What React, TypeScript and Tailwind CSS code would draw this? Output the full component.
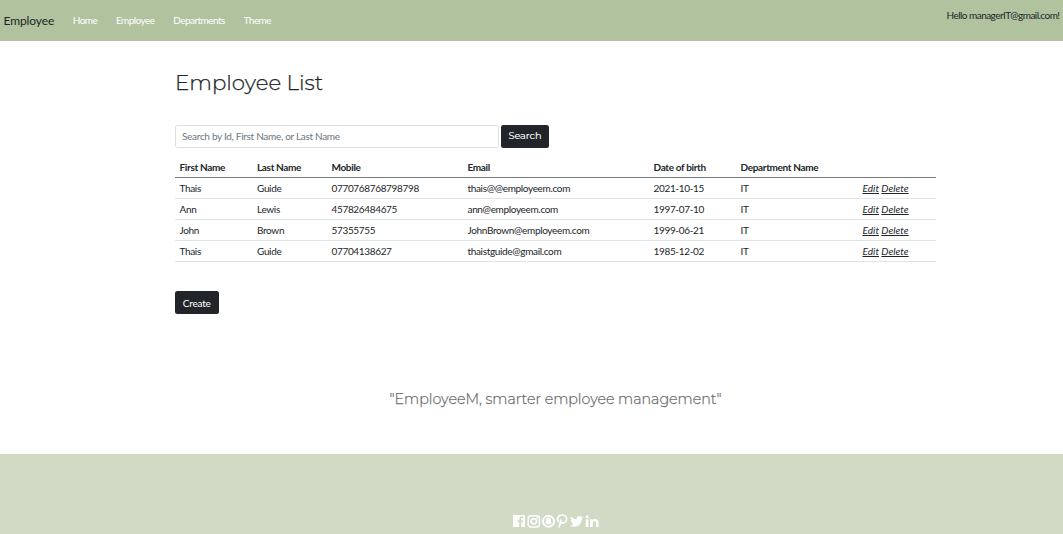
const employees = [
  ["Thais", "Guide", "0770768768798798", "thais@@employeem.com", "2021-10-15", "IT"],
  ["Ann", "Lewis", "457826484675", "ann@employeem.com", "1997-07-10", "IT"],
  ["John", "Brown", "57355755", "JohnBrown@employeem.com", "1999-06-21", "IT"],
  ["Thais", "Guide", "07704138627", "thaistguide@gmail.com", "1985-12-02", "IT"],
];

const headings = ["First Name", "Last Name", "Mobile", "Email", "Date of birth", "Department Name", ""];

function SocialIcons() {
  return (
    <svg viewBox="0 0 88 16" fill="currentColor" className="h-4 w-[88px]" aria-hidden="true">
      <path d="M1.600 2h10.800q.6 0 .6.6v10.800q0 .6-.6.6H9.300V9.200h1.600l.3-1.900H9.300V6.100q0-1 1-1h1V3.400q-4-.7-4 2.400v1.500H5.700v1.900h1.600V14H1.600q-.6 0-.6-.6V2.600q0-.6.6-.6z" />
      <g fill="none" stroke="currentColor" strokeWidth="1.5">
        <rect x="16.200" y="2.700" width="11.300" height="11.300" rx="3" />
        <circle cx="21.850" cy="8.350" r="2.700" />
      </g>
      <circle cx="25.200" cy="5.100" r=".9" />
      <circle cx="36.500" cy="8.200" r="5.500" fill="none" stroke="currentColor" strokeWidth="1.900" />
      <path d="M36.500 4.400c-1.700 0-2.600 1.100-2.500 2.600v1.400c-.2.900-.7 1.300-1.200 1.700.5.500 1.100.4 1.400.9.800-.1 1.300.6 2.300.6s1.500-.7 2.300-.6c.3-.5.9-.4 1.400-.9-.5-.4-1-.8-1.200-1.700V7c.1-1.500-.8-2.600-2.500-2.600z" />
      <path d="M47 13.800c1.100-1.600 1.500-4.600 2-6.700M46.600 8.300C43.900 5.500 46.500 2 50.200 2c3.400 0 5 2.200 4.300 4.900-.8 3.500-4.500 4.200-5.700 2" fill="none" stroke="currentColor" strokeWidth="1.700" strokeLinecap="round" />
      <g transform="translate(58.100 1.700) scale(.0258)">
        <path d="M459.370 151.716c.325 4.548.325 9.097.325 13.645 0 138.720-105.583 298.558-298.558 298.558-59.452 0-114.680-17.219-161.137-47.106 8.447.974 16.568 1.299 25.340 1.299 49.055 0 94.213-16.568 130.274-44.832-46.132-.975-84.792-31.188-98.112-72.772 6.498.974 12.995 1.624 19.818 1.624 9.421 0 18.843-1.300 27.614-3.573-48.081-9.747-84.143-51.980-84.143-102.985v-1.299c13.969 7.797 30.214 12.670 47.431 13.319-28.264-18.843-46.781-51.005-46.781-87.391 0-19.492 5.197-37.360 14.294-52.954 51.655 63.675 129.300 105.258 216.365 109.807-1.624-7.797-2.599-15.918-2.599-24.040 0-57.828 46.782-104.934 104.934-104.934 30.213 0 57.502 12.670 76.670 33.137 23.715-4.548 46.456-13.320 66.599-25.340-7.798 24.366-24.366 44.833-46.132 57.827 21.117-2.273 41.584-8.122 60.426-16.243-14.292 20.791-32.161 39.308-52.628 54.253z" />
      </g>
      <circle cx="75.100" cy="3.700" r="1.500" />
      <path d="M73.800 6.200h2.600V14h-2.600zM78.100 6.200h2.500v1.100c1.300-2 6-1.900 6 2.100V14H84v-4c0-2.300-3.300-2.300-3.300 0v4h-2.600z" />
    </svg>
  );
}

export default function App() {
  return (
    <div className="flex h-[534px] w-full flex-col overflow-hidden bg-white font-['Lato',sans-serif] text-[10px] tracking-[-0.34px] text-[#212529]">
      <header className="flex h-[41px] shrink-0 justify-between bg-[#b1c29e] px-[3.5px]">
        <nav className="flex h-[41px] items-center pt-px">
          <a href="#" className="mr-[18.500px] text-[12px] tracking-[-0.1px]">Employee</a>
          <div className="mb-[2px] flex gap-[18.800px] tracking-[-0.55px] text-white">
            <a href="#">Home</a>
            <a href="#">Employee</a>
            <a href="#">Departments</a>
            <a href="#">Theme</a>
          </div>
        </nav>
        <span className="pt-[8px] leading-[14px] tracking-[-0.53px]">Hello managerIT@gmail.com!</span>
      </header>

      <main className="ml-[175px] flex h-[413px] w-[761px] shrink-0 flex-col">
        <h1 className="mt-[25px] font-['Montserrat','Inter',sans-serif] text-[21.3px] font-light leading-8 tracking-normal [-webkit-text-stroke:0.25px_#212529]">Employee List</h1>
        <form className="mt-[27px] flex gap-[2.5px]">
          <input
            placeholder="Search by Id, First Name, or Last Name"
            className="h-[23px] w-[323.500px] rounded-[2.5px] border border-[#dbdfe3] px-[6px] pb-[2px] tracking-[-0.3px] placeholder:text-[#6c757d]"
          />
          <button type="button" className="h-[23px] w-[48px] rounded-[2.5px] bg-[#212529] font-['Montserrat','Inter',sans-serif] text-[9.8px] tracking-[-0.05px] text-white [-webkit-text-stroke:0.15px_white]">Search</button>
        </form>
        <table className="mt-[8px] w-full table-fixed border-collapse text-left">
          <colgroup>
            <col className="w-[77.500px]" />
            <col className="w-[74.500px]" />
            <col className="w-[136px]" />
            <col className="w-[186px]" />
            <col className="w-[87px]" />
            <col className="w-[122px]" />
            <col className="w-[78px]" />
          </colgroup>
          <thead>
            <tr className="h-[21px] border-b border-[#777a7d]">
              {headings.map((h) => <th key={h} className="whitespace-nowrap px-[4.5px] pt-[2.500px] pb-0 font-bold">{h}</th>)}
            </tr>
          </thead>
          <tbody>
            {employees.map((row) => (
              <tr key={row[2]} className="h-[21.200px] border-b border-[#e1e4e7]">
                {row.map((v, i) => <td key={i} className="px-[4.5px] pt-px pb-0">{v}</td>)}
                <td className="whitespace-nowrap px-[4.5px] pt-px pb-0 italic tracking-[0.04px]">
                  <a href="#" className="underline">Edit</a> <a href="#" className="underline">Delete</a>
                </td>
              </tr>
            ))}
          </tbody>
        </table>
        <button type="button" className="mt-[29px] h-[23px] w-[43.500px] rounded-[2.5px] bg-[#212529] pt-px tracking-[-0.2px] text-white">Create</button>
        <p className="mt-[75px] text-center font-['Montserrat','Inter',sans-serif] text-[14.22px] font-light leading-[20px] tracking-normal text-[#6c6c6c] [-webkit-text-stroke:0.25px_#6c6c6c]">"EmployeeM, smarter employee management"</p>
      </main>

      <footer className="flex h-20 shrink-0 items-start bg-[#d0dac5] pt-[59px] pl-[511.500px] text-white">
        <SocialIcons />
      </footer>
    </div>
  );
}
